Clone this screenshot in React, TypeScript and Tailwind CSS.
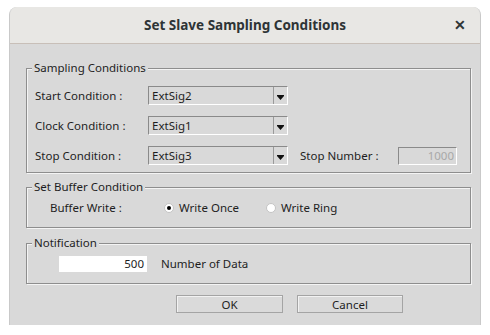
import React from "react";

const font = { fontFamily: '"Noto Sans", "Open Sans", sans-serif' };

function Group({ title, className, children }: { title: string; className?: string; children: React.ReactNode }) {
  return (
    <div className={`relative mx-[16px] w-[445px] border border-[#8e8e8e] shadow-[inset_1px_1px_0_#f4f4f4,1px_1px_0_#f4f4f4] ${className ?? ""}`}>
      {/* caption sits on top of the frame line */}
      <span className="absolute -top-[9px] left-[5px] bg-[#d9d9d9] px-[2px] text-[11.5px] leading-[16px] text-[#1e1e1e]">
        {title}
      </span>
      {children}
    </div>
  );
}

function Combo({ value }: { value: string }) {
  return (
    <div className="flex h-[19px] w-[140px] border-t border-l border-[#8a8a8a] border-r-white border-b-white border-r border-b">
      <div className="flex-1 pl-[3px] text-[11.5px] leading-[17px] text-[#1e1e1e]">{value}</div>
      <div className="flex w-[14px] items-end justify-center border-l border-[#9a9a9a] pb-[4px]">
        <svg width="7" height="5" viewBox="0 0 7 5">
          <rect x="0" y="0" width="7" height="1" fill="#111" />
          <polygon points="0,1 7,1 3.5,5" fill="#111" />
        </svg>
      </div>
    </div>
  );
}

function Radio({ checked, label }: { checked?: boolean; label: string }) {
  return (
    <div className="flex items-center gap-[5px]">
      <span className="flex h-[10px] w-[10px] items-center justify-center rounded-full border border-[#c4c4c4] bg-white">
        {checked && <span className="h-[4px] w-[4px] rounded-full bg-black" />}
      </span>
      <span>{label}</span>
    </div>
  );
}

export default function App() {
  return (
    <div className="h-[335px] w-[490px] bg-white pl-[9px] pt-[7px]" style={font}>
      <div className="flex h-[318px] w-[472px] flex-col overflow-hidden rounded-t-[8px] border-x border-[#c9c9c9] bg-[#d9d9d9]">
        {/* Title bar */}
        <div className="relative flex h-[37px] shrink-0 items-center justify-center border-b border-[#c8bfb8] bg-[#e8e7e4]">
          <span className="text-[13.5px] font-bold text-[#2e3436]">Set Slave Sampling Conditions</span>
          <span className="absolute right-[14px] top-[11px] text-[14px] font-bold leading-[14px] text-[#2e3436]">✕</span>
        </div>

        <div className="flex flex-col text-[11.5px] text-[#1e1e1e]">
          <Group title="Sampling Conditions" className="mt-[24px] h-[105px]">
            <div className="flex flex-col gap-[11px] pl-[8px] pt-[17px]">
              <div className="flex items-center">
                <span className="w-[113px]">Start Condition :</span>
                <Combo value="ExtSig2" />
              </div>
              <div className="flex items-center">
                <span className="w-[113px]">Clock Condition :</span>
                <Combo value="ExtSig1" />
              </div>
              <div className="flex items-center">
                <span className="w-[113px]">Stop Condition :</span>
                <Combo value="ExtSig3" />
                <span className="ml-[12px] w-[98px]">Stop Number :</span>
                <div className="h-[18px] w-[59px] border-t border-l border-[#8a8a8a] border-r border-b border-r-white border-b-white pr-[2px] text-right leading-[16px] text-[#a8a8a8]">
                  1000
                </div>
              </div>
            </div>
          </Group>

          <Group title="Set Buffer Condition" className="mt-[14px] h-[41px]">
            <div className="flex h-full items-center pl-[23px]">
              <span className="w-[114px]">Buffer Write :</span>
              <div className="w-[102px]">
                <Radio checked label="Write Once" />
              </div>
              <Radio label="Write Ring" />
            </div>
          </Group>

          <Group title="Notification" className="mt-[15px] h-[41px]">
            <div className="flex h-full items-center pl-[32px]">
              <div className="h-[16px] w-[88px] bg-white pr-[3px] text-right leading-[16px]">500</div>
              <span className="ml-[14px]">Number of Data</span>
            </div>
          </Group>

          <div className="mt-[11px] flex gap-[14px] pl-[166px]">
            <button className="h-[18px] w-[107px] border border-[#a4a4a4] bg-[#dadada] text-[11.5px] leading-[15px] shadow-[inset_1px_1px_0_#f2f2f2]">
              OK
            </button>
            <button className="h-[18px] w-[106px] border border-[#a4a4a4] bg-[#dadada] text-[11.5px] leading-[15px] shadow-[inset_1px_1px_0_#f2f2f2]">
              Cancel
            </button>
          </div>
        </div>
      </div>
    </div>
  );
}
